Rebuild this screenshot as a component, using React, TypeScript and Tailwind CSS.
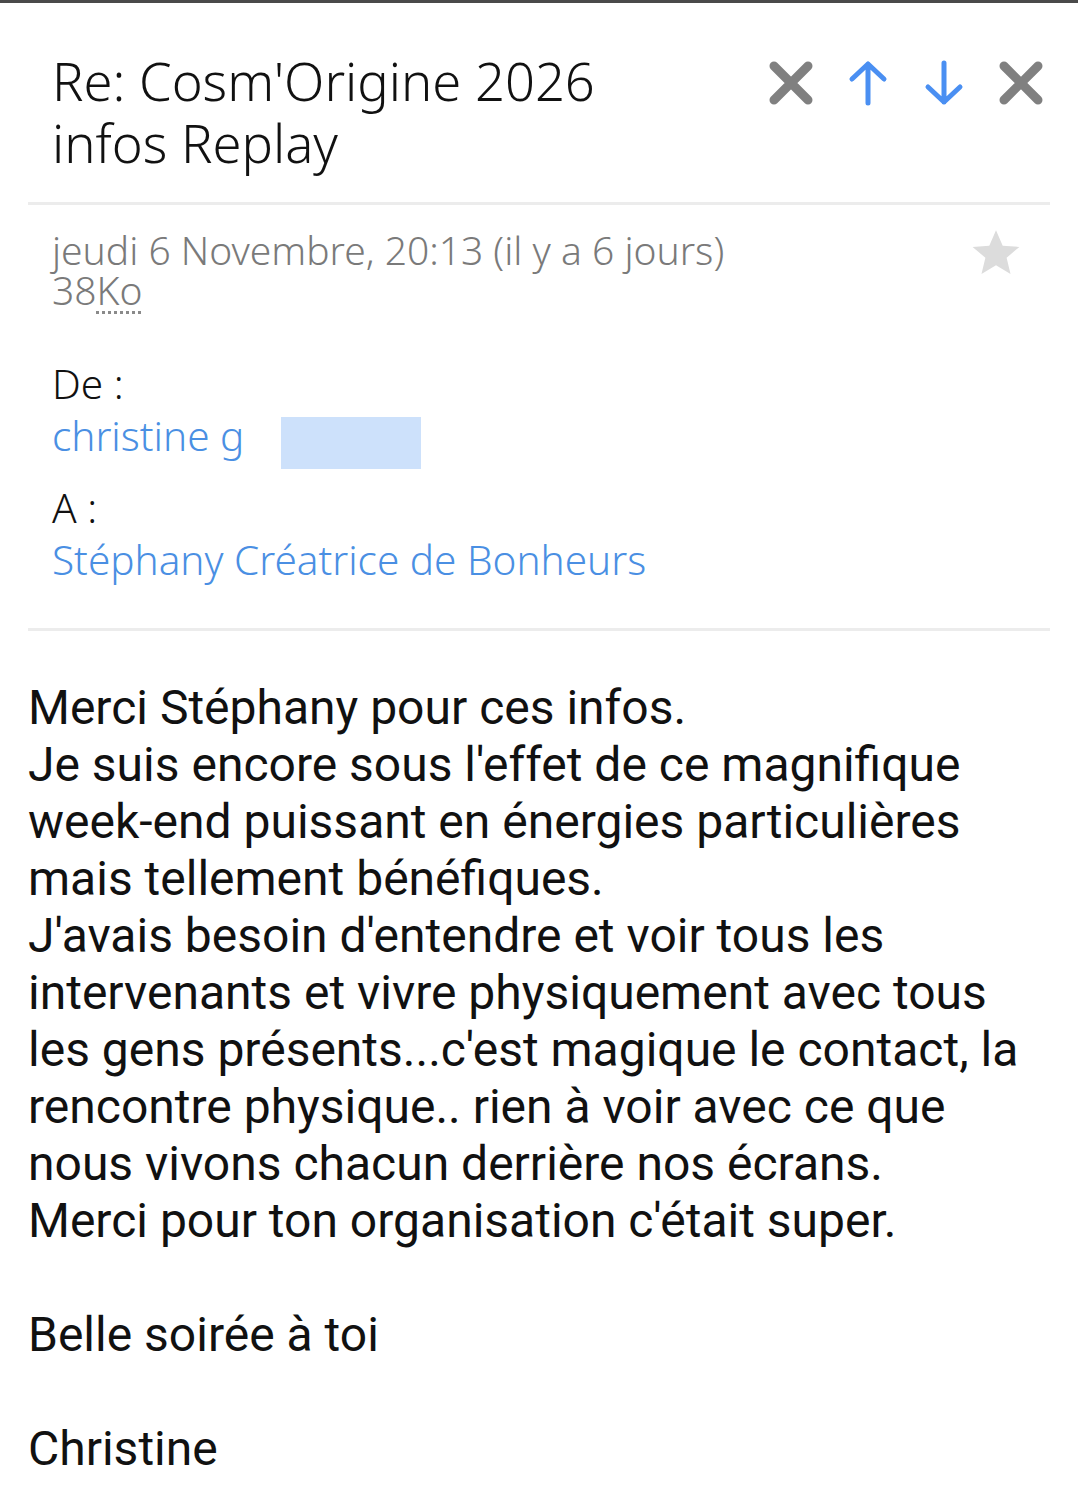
import React from 'react';

const bodyLines = [
    'Merci Stéphany pour ces infos.',
    "Je suis encore sous l'effet de ce magnifique",
    'week-end puissant en énergies particulières',
    'mais tellement bénéfiques.',
    "J'avais besoin d'entendre et voir tous les",
    'intervenants et vivre physiquement avec tous',
    "les gens présents...c'est magique le contact, la",
    'rencontre physique.. rien à voir avec ce que',
    'nous vivons chacun derrière nos écrans.',
    "Merci pour ton organisation c'était super.",
    '',
    'Belle soirée à toi',
    '',
    'Christine',
];

function CloseIcon() {
    return (
        <svg width="46" height="46" viewBox="0 0 46 46" fill="none">
            <path d="M6 6L40 40M40 6L6 40" stroke="#808080" strokeWidth="9" strokeLinecap="round" />
        </svg>
    );
}

function ArrowIcon({ down }: { down?: boolean }) {
    return (
        <svg width="44" height="46" viewBox="0 0 44 46" fill="none" className={down ? 'rotate-180' : ''}>
            <path d="M22 43V4M6 19L22 4L38 19" stroke="#4a8ff2" strokeWidth="5" strokeLinecap="round" strokeLinejoin="round" />
        </svg>
    );
}

function Star() {
    return (
        <svg width="52" height="52" viewBox="0 0 24 24">
            <path d="M12 1.5l3.1 7.1 7.7.6-5.9 5 1.8 7.5L12 17.7l-6.7 4 1.8-7.5-5.9-5 7.7-.6z" fill="#dcdcdc" />
        </svg>
    );
}

export default function App() {
    return (
        <div className="min-h-[1504px] w-[1078px] bg-white">
            {/* Top edge */}
            <div className="h-[3px] bg-[#4a4a4a]" />

            {/* Subject + actions */}
            <div className="flex items-start justify-between pl-[52px] pr-[34px] pt-[47px]">
                <h1 className="font-['Noto_Sans',sans-serif] text-[52.5px] leading-[62px] text-[#111] font-light">
                    Re: Cosm'Origine 2026
                    <br />
                    infos Replay
                </h1>
                <div className="flex items-center gap-[32px] pt-[10px]">
                    <CloseIcon />
                    <ArrowIcon />
                    <ArrowIcon down />
                    <CloseIcon />
                </div>
            </div>

            <div className="mx-[28px] mt-[28px] h-[3px] bg-[#ececec]" />

            {/* Meta */}
            <div className="font-['Noto_Sans',sans-serif] pl-[52px] pr-[56px] pt-[24px]">
                <div className="flex justify-between">
                    <div className="text-[39px] leading-[41px] text-[#7a7a7a] font-light">
                        <div>jeudi 6 Novembre, 20:13 (il y a 6 jours)</div>
                        <div className="leading-[40px]">
                            38<abbr className="no-underline underline decoration-dotted decoration-[3px] decoration-[#8a8a8a] underline-offset-[6px]">Ko</abbr>
                        </div>
                    </div>
                    <div className="-mt-[2px]">
                        <Star />
                    </div>
                </div>

                <div className="mt-[48px] text-[40.5px] leading-[52px] font-light">
                    <div className="text-[#111]">De :</div>
                    <div className="flex h-[52px] items-start">
                        <span className="text-[#4a8fe3]">christine g</span>
                        <span className="ml-[37px] h-[52px] w-[140px] translate-y-[7px] bg-[#cde1fb]" />
                    </div>
                    <div className="mt-[20px] text-[#111]">A :</div>
                    <div className="text-[#4a8fe3]">Stéphany Créatrice de Bonheurs</div>
                </div>
            </div>

            <div className="mx-[28px] mt-[42px] h-[3px] bg-[#ececec]" />

            {/* Body */}
            <div className="px-[28px] pt-[48px] font-['Roboto',sans-serif] text-[48px] leading-[57px] text-[#111]">
                {bodyLines.map((line, i) => (
                    <div key={i} className="h-[57px] whitespace-nowrap">
                        {line}
                    </div>
                ))}
            </div>
        </div>
    );
}
